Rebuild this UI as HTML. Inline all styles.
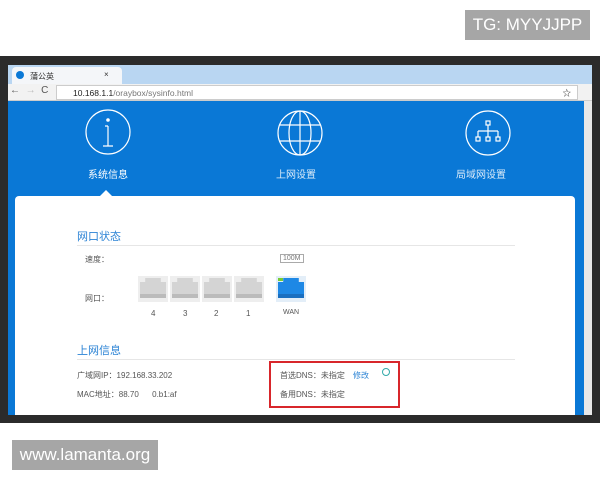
<!DOCTYPE html>
<html><head><meta charset="utf-8"><style>
*{margin:0;padding:0;box-sizing:border-box}
body{width:600px;height:480px;background:#fff;position:relative;overflow:hidden;font-family:"Liberation Sans","Noto Sans CJK SC",sans-serif}
.abs{position:absolute}
.tag{background:#a6a6a6;color:#fff;font-size:17px;display:flex;align-items:center;justify-content:center}
.frame{left:0;top:56px;width:600px;height:367px;background:#2b2b2b}
.tabbar{left:8px;top:65px;width:584px;height:19px;background:#b9d6f2}
.tab{left:12px;top:67px;width:110px;height:17px;background:#f4f6f9;border-radius:4px 4px 0 0;font-size:8px;color:#333;padding:4px 0 0 18px}
.addr{left:8px;top:84px;width:584px;height:17px;background:#f2f2f2;border-bottom:1px solid #ccc}
.url{left:56px;top:85px;width:522px;height:15px;background:#fff;border:1px solid #ccc;font-size:8.5px;color:#222;padding:2px 0 0 16px}
.blue{left:8px;top:101px;width:576px;height:314px;background:#0a78d6}
.sb{left:584px;top:101px;width:8px;height:314px;background:#e8e8e8}
.card{left:15px;top:196px;width:560px;height:219px;background:#fff;border-radius:4px 4px 0 0}
.lbl{color:#fff;font-size:10px}
.h{color:#2b83d5;font-size:11px}
.line{height:1px;background:#e6e6e6}
.t{font-size:8px;color:#555}
.port{width:30px;height:26px;background:#eee;padding:2px}
.port i{display:block;width:26px;height:20px;background:#d4d4d4;clip-path:polygon(20% 0,80% 0,80% 20%,100% 20%,100% 100%,0 100%,0 20%,20% 20%);border-bottom:4px solid #bbb}
</style></head><body>
<div class="abs tag" style="left:465px;top:10px;width:125px;height:30px">TG: MYYJJPP</div>
<div class="abs frame"></div>
<div class="abs tabbar"></div>
<div class="abs tab">蒲公英<span style="position:absolute;left:92px;top:3px">×</span></div>
<div class="abs" style="left:16px;top:71px;width:8px;height:8px;border-radius:50%;background:#0a78d6"></div>
<div class="abs addr"></div>
<div class="abs" style="left:10px;top:85px;font-size:10px;color:#555">←&nbsp;&nbsp;<span style="color:#bbb">→</span>&nbsp;&nbsp;C</div>
<div class="abs url">10.168.1.1<span style="color:#777">/oraybox/sysinfo.html</span><span style="position:absolute;right:6px;top:1px">☆</span></div>
<div class="abs blue"></div>
<div class="abs sb"></div>
<svg class="abs" style="left:8px;top:101px" width="576" height="95" fill="none" stroke="#fff" stroke-width="1.2">
<circle cx="100" cy="31" r="22"/><circle cx="100" cy="19" r="1.2" fill="#fff"/><path d="M100 25V45M95 45H105M97 25H100"/>
<circle cx="292" cy="32" r="22"/><ellipse cx="292" cy="32" rx="11" ry="22"/><path d="M272 24H312M272 40H312M292 10V54"/>
<circle cx="480" cy="32" r="22"/><rect x="478" y="20" width="4" height="4"/><path d="M480 24V30M470 30H490M470 30V36M480 30V36M490 30V36"/><rect x="468" y="36" width="4" height="4"/><rect x="478" y="36" width="4" height="4"/><rect x="488" y="36" width="4" height="4"/>
<path d="M92 95L98 89L104 95Z" fill="#fff" stroke="none"/>
</svg>
<div class="abs lbl" style="left:88px;top:166px">系统信息</div>
<div class="abs lbl" style="left:276px;top:166px;opacity:.85">上网设置</div>
<div class="abs lbl" style="left:456px;top:166px;opacity:.85">局域网设置</div>
<div class="abs card"></div>
<div class="abs h" style="left:77px;top:228px">网口状态</div>
<div class="abs line" style="left:77px;top:245px;width:438px"></div>
<div class="abs t" style="left:85px;top:254px">速度：</div>
<div class="abs t" style="left:280px;top:254px;border:1px solid #aaa;font-size:7px;padding:0 2px;color:#777">100M</div>
<div class="abs t" style="left:85px;top:293px">网口：</div>
<div class="abs port" style="left:138px;top:276px"><i></i></div>
<div class="abs port" style="left:170px;top:276px"><i></i></div>
<div class="abs port" style="left:202px;top:276px"><i></i></div>
<div class="abs port" style="left:234px;top:276px"><i></i></div>
<div class="abs port" style="left:276px;top:276px;background:#e3eef8"><i style="background:#1e88e5;border-bottom-color:#1a6fc0"></i></div>
<div class="abs" style="left:278px;top:278px;width:5px;height:3px;background:#7c3"></div>
<div class="abs t" style="left:151px;top:309px">4</div>
<div class="abs t" style="left:183px;top:309px">3</div>
<div class="abs t" style="left:214px;top:309px">2</div>
<div class="abs t" style="left:246px;top:309px">1</div>
<div class="abs t" style="left:283px;top:309px;font-size:7px">WAN</div>
<div class="abs h" style="left:77px;top:342px">上网信息</div>
<div class="abs line" style="left:77px;top:359px;width:438px"></div>
<div class="abs t" style="left:77px;top:370px">广域网IP：192.168.33.202</div>
<div class="abs t" style="left:77px;top:389px">MAC地址：88.70 &nbsp; &nbsp; &nbsp;0.b1:af</div>
<div class="abs" style="left:269px;top:361px;width:131px;height:47px;border:2px solid #d8262b"></div>
<div class="abs t" style="left:280px;top:370px">首选DNS：未指定</div>
<div class="abs t" style="left:353px;top:370px;color:#2b83d5">修改</div>
<div class="abs" style="left:382px;top:368px;width:8px;height:8px;border:1.5px solid #3aa;border-radius:50%"></div>
<div class="abs t" style="left:280px;top:389px">备用DNS：未指定</div>
<div class="abs tag" style="left:12px;top:440px;width:146px;height:30px">www.lamanta.org</div>
</body></html>
